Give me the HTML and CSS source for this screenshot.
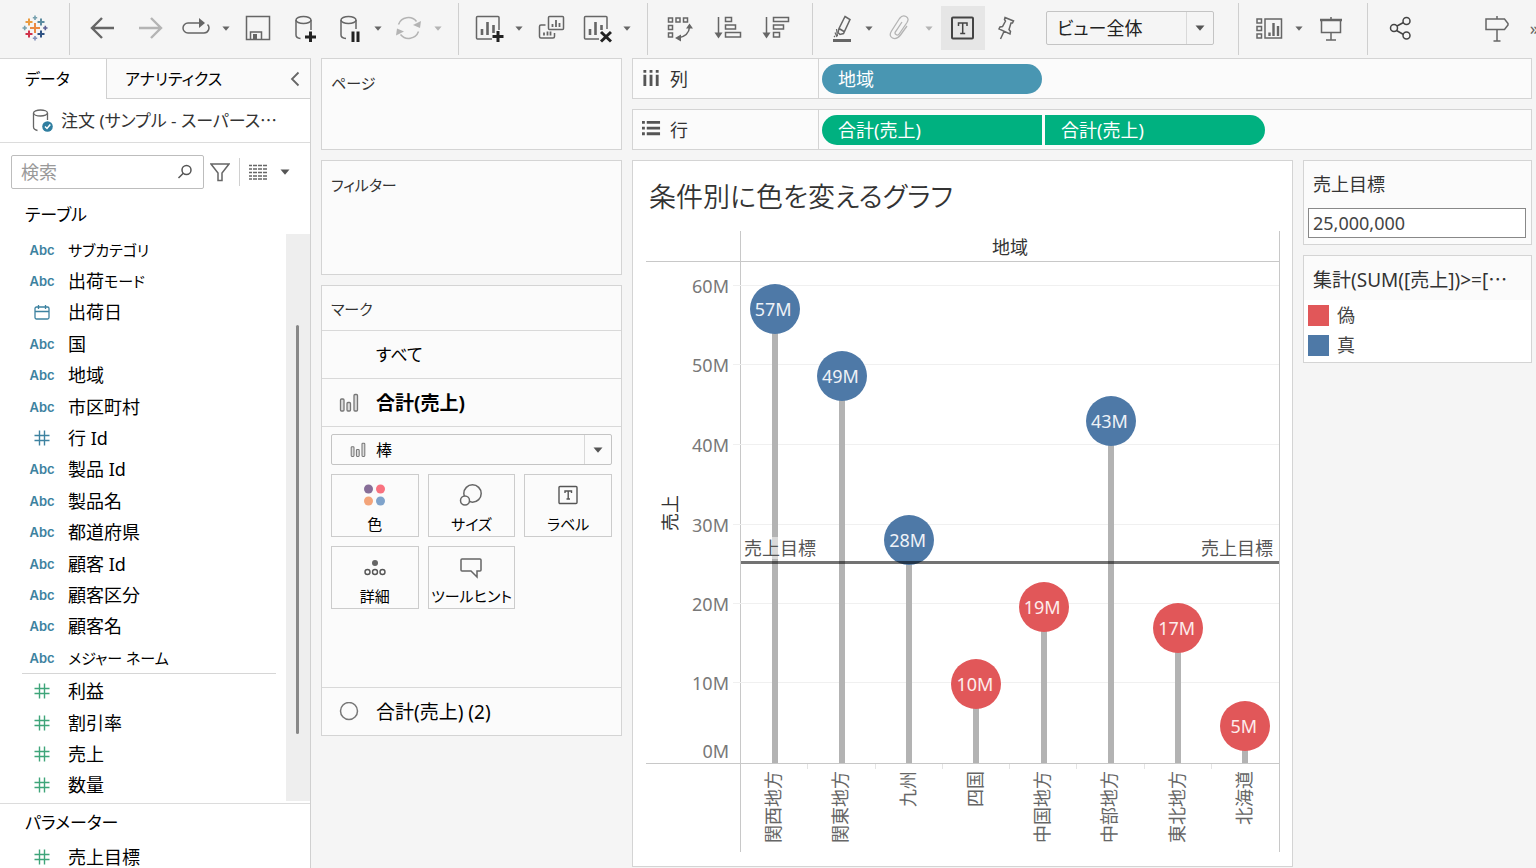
FILE: index.html
```html
<!DOCTYPE html>
<html lang="ja">
<head>
  <meta charset="UTF-8">
  <title>条件別に色を変えるグラフ</title>
  <link rel="stylesheet" href="styles.css">
</head>
<body>
  <svg class="defs" width="0" height="0" aria-hidden="true">
    <symbol id="caret" viewBox="0 0 10 6"><path d="M0.5 0.500h9L5 5.800z" fill="currentColor"/></symbol>
    <symbol id="hash" viewBox="0 0 16 16"><path d="M5.500 0.500v15M10.500 0.500v15M0.500 5.500h15M0.500 10.500h15" stroke="currentColor" stroke-width="1.400" fill="none"/></symbol>
    <symbol id="bars" viewBox="0 0 20 20"><g fill="#ddd" stroke="#777" stroke-width="1.300"><rect x="1.500" y="6" width="3.500" height="12" rx="1"/><rect x="8" y="9.500" width="3.500" height="8.500" rx="1"/><rect x="15" y="1.500" width="3.500" height="16.500" rx="1"/></g></symbol>
  </svg>

  <header class="toolbar">
    <div class="logo">
      <svg width="26" height="26" viewBox="0 0 26 26" fill="none">
        <path d="M13 8v10M8 13h10" stroke="#eb8a43" stroke-width="2"/>
        <path d="M7 3.500v7M3.500 7h7" stroke="#eb9b3f" stroke-width="2"/>
        <path d="M19 3.500v7M15.500 7h7" stroke="#5c8ba0" stroke-width="2"/>
        <path d="M7 15.500v7M3.500 19h7" stroke="#d0334b" stroke-width="2"/>
        <path d="M19 15.500v7M15.500 19h7" stroke="#2e5283" stroke-width="2"/>
        <path d="M13 .500v4.500M10.800 2.700h4.400M2.700 10.800v4.400M.500 13h4.400" stroke="#76a0ae" stroke-width="1.600"/>
        <path d="M23.300 10.800v4.400M21.100 13h4.400" stroke="#5b5f94" stroke-width="1.600"/>
        <path d="M13 21v4.400M10.800 23.200h4.400" stroke="#8290b8" stroke-width="1.600"/>
      </svg>
    </div>

    <div class="group">
      <button class="tool wide" aria-label="戻る"><svg width="28" height="28" viewBox="0 0 28 28"><path d="M26 14H4M14 4L4 14l10 10" stroke-width="2.400"/></svg></button>
      <button class="tool wide off" aria-label="進む"><svg width="28" height="28" viewBox="0 0 28 28"><path d="M3 14h22M15 4l10 10-10 10" stroke-width="2.400"/></svg></button>
      <button class="tool" aria-label="やり直し"><svg width="28" height="28" viewBox="0 0 28 28"><path d="M18 9H6a5 5 0 0 0 0 10h16a5 5 0 0 0 3.500-8.500"/><path class="fill" d="M17 4l6 5-6 5z"/></svg></button>
      <button class="tool drop" aria-label="やり直しメニュー"><svg width="8" height="5"><use href="#caret"/></svg></button>
      <button class="tool wide" aria-label="保存"><svg width="28" height="28" viewBox="0 0 28 28"><path d="M2.500 2.500h23v23h-23zM6.500 25v-7h11v7"/><path class="fill" d="M9 20h4v5H9z"/></svg></button>
      <button class="tool wide" aria-label="新しいデータソース"><svg width="28" height="28" viewBox="0 0 28 28"><ellipse cx="11.500" cy="6" rx="7.500" ry="3.500"/><path d="M4 6v15q0 3 4.500 3.500M19 6v10"/><path class="strong" d="M18.500 17.500v11M13 23h11"/></svg></button>
      <button class="tool narrow" aria-label="自動更新の一時停止"><svg width="28" height="28" viewBox="0 0 28 28"><ellipse cx="12.500" cy="6" rx="7.500" ry="3.500"/><path d="M5 6v15q0 3 5 3.500M20 6v9"/><path class="strong" d="M17 17.500v10.500M22 17.500v10.500"/></svg></button>
      <button class="tool drop" aria-label="更新メニュー"><svg width="8" height="5"><use href="#caret"/></svg></button>
      <button class="tool off" aria-label="更新"><svg width="28" height="28" viewBox="0 0 28 28"><path d="M4.500 10.500a10.500 10.500 0 0 1 18-3M24.500 17.500a10.500 10.500 0 0 1-18 3"/><path class="fill" d="M27 7l-1 7-7-3zM2 21.500l1-7 7 3z"/></svg></button>
      <button class="tool drop off" aria-label="実行メニュー"><svg width="8" height="5"><use href="#caret"/></svg></button>
    </div>

    <div class="group">
      <button class="tool" aria-label="新しいワークシート"><svg width="30" height="30" viewBox="0 0 30 30"><path d="M18 26H3.500a1 1 0 0 1-1-1V4.500a1 1 0 0 1 1-1H24a1 1 0 0 1 1 1V17"/><path d="M8 22v-6M13.500 22V9M19.500 20v-8" stroke-width="2.600"/><path class="strong" d="M24 18v11M18.500 23.500h11"/></svg></button>
      <button class="tool drop" aria-label="ワークシートメニュー"><svg width="8" height="5"><use href="#caret"/></svg></button>
      <button class="tool wide" aria-label="複製"><svg width="28" height="28" viewBox="0 0 28 28"><rect x="11.500" y="2.500" width="15" height="13" rx="1"/><path d="M8.500 11H4a1.500 1.500 0 0 0-1.500 1.500v10A1.500 1.500 0 0 0 4 24h12a1.500 1.500 0 0 0 1.500-1.500V19"/><path d="M15.500 13v-3M19 13V6M22.500 13V9M7 21.500v-3M10.500 21.500v-4M13.500 21.500v-4" stroke-width="1.800"/></svg></button>
      <button class="tool" aria-label="クリア"><svg width="30" height="30" viewBox="0 0 30 30"><path d="M17 26H3.500a1 1 0 0 1-1-1V4.500a1 1 0 0 1 1-1H24a1 1 0 0 1 1 1V16"/><path d="M8 22v-6M13.500 22V9M19.500 17v-5" stroke-width="2.600"/><path class="strong" d="M19 19l10 9.500M29 19l-10 9.500"/></svg></button>
      <button class="tool drop" aria-label="クリアメニュー"><svg width="8" height="5"><use href="#caret"/></svg></button>
    </div>

    <div class="group">
      <button class="tool wide" aria-label="行と列の交換"><svg width="28" height="28" viewBox="0 0 28 28"><path d="M2.500 4h4v4h-4zM10 4h4v4h-4zM17.500 4h4v4h-4zM2.500 11.500h4v4h-4zM2.500 19h4v4h-4zM12 24q11-2 11.500-11" /><path class="fill" d="M20 14.500l3.500-5 3.500 5zM15 20.500v7l-6-3.500z"/></svg></button>
      <button class="tool wide" aria-label="昇順"><svg width="28" height="28" viewBox="0 0 28 28"><path d="M4.500 3v16M11.500 3.500h6v4h-6zM11.500 11h10v4h-10zM11.500 18.500h15v4.500h-15z"/><path class="fill" d="M.500 18.500h8l-4 6z"/></svg></button>
      <button class="tool wide" aria-label="降順"><svg width="28" height="28" viewBox="0 0 28 28"><path d="M4.500 3v16M11.500 3.500h15v4h-15zM11.500 11h10v4h-10zM11.500 18.500h6v4.500h-6z"/><path class="fill" d="M.500 18.500h8l-4 6z"/></svg></button>
    </div>

    <div class="group">
      <button class="tool narrow" aria-label="ハイライト"><svg width="28" height="28" viewBox="0 0 28 28"><path d="M18 2.500l5 3-6.500 14-3.500 1-2-2 1-4zM12 14.500l5 3"/><path d="M9.500 15l1 7M8 18.500l2 4.500M7 22l1 1" stroke-width="1.200"/><path d="M6 26.500h18" stroke-width="3"/></svg></button>
      <button class="tool drop" aria-label="ハイライトメニュー"><svg width="8" height="5"><use href="#caret"/></svg></button>
      <button class="tool off" aria-label="グループ"><svg width="28" height="28" viewBox="0 0 28 28"><path d="M22 12l-6.500 9q-4 5-8 3t-1-7l8-12.500q3-4 6.500-2t1 6l-7.500 11q-1.500 2.500-3.500 1t0-3.500l6-9" stroke-width="1.300"/></svg></button>
      <button class="tool drop off" aria-label="グループメニュー"><svg width="8" height="5"><use href="#caret"/></svg></button>
      <button class="tool active" aria-label="マークラベル"><svg width="28" height="28" viewBox="0 0 28 28"><rect x="3" y="3.500" width="21" height="21" rx="1" stroke-width="2"/><path d="M9.500 12V9h8.500v3M13.700 9v10.500M11.200 19.500h5"/></svg></button>
      <button class="tool" aria-label="固定"><svg width="28" height="28" viewBox="0 0 28 28"><path d="M12 3.500l8.500 3.500-1 2-1.500 0-2 6.500 1.500 2-.500 2.500-11-5 1-2 2.500-.500 3-5.500-1-1.500zM11 17.500L7.500 25"/></svg></button>
      <div class="combo fit">
        <select aria-label="表示サイズ"><option>ビュー全体</option></select>
        <span class="combo-arrow"><svg width="10" height="6"><use href="#caret"/></svg></span>
      </div>
    </div>

    <div class="group">
      <button class="tool" aria-label="カード表示"><svg width="32" height="28" viewBox="0 0 32 28"><path d="M4 5h4.500v4H4zM4 12.500h4.500v4H4zM4 20h4.500v4H4zM12 5h16.500v19H12z"/><path d="M16.500 22v-3.500M20.500 22V9M25 22V12" stroke-width="2.400"/></svg></button>
      <button class="tool drop" aria-label="カードメニュー"><svg width="8" height="5"><use href="#caret"/></svg></button>
      <button class="tool wide" aria-label="プレゼンテーション"><svg width="28" height="28" viewBox="0 0 28 28"><path d="M4.500 6v12.500h19V6M14 18.500V26M9 26h10M14 3v3"/><path d="M3 6h22" stroke-width="2.500"/></svg></button>
    </div>

    <div class="group last">
      <button class="tool wide share" aria-label="共有"><svg width="28" height="28" viewBox="0 0 28 28"><circle cx="8" cy="14" r="3.500"/><circle cx="20.500" cy="7" r="3.500"/><circle cx="20.500" cy="21.500" r="3.500"/><path d="M11 12l6.500-3.500M10.500 16.500l7 4"/></svg></button>
      <button class="tool guide" aria-label="データガイド"><svg width="28" height="28" viewBox="0 0 28 28"><path d="M3 5h18.500l3.500 4.500v1.500l-3.500 4.500H3zM14 2v3M14 15.500V27M10.500 27h7"/></svg></button>
      <button class="tool more" aria-label="その他">»</button>
    </div>
  </header>

  <main class="workspace">
    <aside class="sidebar">
      <div class="tabs">
        <button class="tab current">データ</button>
        <button class="tab">アナリティクス
          <svg width="10" height="16" viewBox="0 0 10 16"><path d="M8.500 1.500L2 8l6.500 6.500" fill="none" stroke="#666" stroke-width="1.800"/></svg>
        </button>
      </div>
      <div class="source">
        <svg width="24" height="26" viewBox="0 0 24 26" fill="none" stroke="#666" stroke-width="1.300"><ellipse cx="9.500" cy="5" rx="7" ry="3"/><path d="M2.500 5v14q0 2.500 4 3.500M16.500 5v7"/><circle cx="16.500" cy="18.500" r="5.300" fill="#2f7ea0" stroke="none"/><path d="M14 18.500l2 2 3.300-4" stroke="#fff" stroke-width="1.500"/></svg>
        <span>注文 (サンプル - スーパース<span class="dots">…</span></span>
      </div>
      <div class="search-row">
        <label class="search">
          <input type="text" placeholder="検索" aria-label="検索">
          <svg width="16" height="16" viewBox="0 0 16 16" fill="none" stroke="#555" stroke-width="1.500"><circle cx="9.500" cy="6" r="4.500"/><path d="M6.300 9.200L1.500 14"/></svg>
        </label>
        <button class="plain" aria-label="フィルター"><svg width="20" height="20" viewBox="0 0 20 20"><path d="M1 2h18l-7 9v7.500H8V11z" fill="none" stroke="#666" stroke-width="1.500"/></svg></button>
        <button class="plain view" aria-label="表示"><svg width="18" height="16" viewBox="0 0 18 16" stroke="#666" stroke-width="1.600"><path d="M0 1.500h18M0 5h18M0 8.500h18M0 12h18M0 15h18" stroke-dasharray="3 1 4 1 4 1 4 0"/></svg><svg width="10" height="6"><use href="#caret"/></svg></button>
      </div>
      <h2 class="side-title">テーブル</h2>
      <div class="list">
        <ul class="fields">
          <li><i>Abc</i><span class="kana">サブカテゴリ</span></li>
          <li><i>Abc</i>出荷<span class="kana">モード</span></li>
          <li><i><svg width="16" height="16" viewBox="0 0 16 16" fill="none" stroke="currentColor" stroke-width="1.300"><rect x="1" y="3" width="14" height="12" rx="1.500"/><path d="M1 7.500h14M4.500 1v4M11.500 1v4"/></svg></i>出荷日</li>
          <li><i>Abc</i>国</li>
          <li><i>Abc</i>地域</li>
          <li><i>Abc</i>市区町村</li>
          <li><i><svg width="16" height="16"><use href="#hash"/></svg></i>行 Id</li>
          <li><i>Abc</i>製品 Id</li>
          <li><i>Abc</i>製品名</li>
          <li><i>Abc</i>都道府県</li>
          <li><i>Abc</i>顧客 Id</li>
          <li><i>Abc</i>顧客区分</li>
          <li><i>Abc</i>顧客名</li>
          <li><i>Abc</i><span class="kana">メジャー ネーム</span></li>
          <li class="rule"></li>
          <li class="measure"><i><svg width="16" height="16"><use href="#hash"/></svg></i>利益</li>
          <li class="measure"><i><svg width="16" height="16"><use href="#hash"/></svg></i>割引率</li>
          <li class="measure"><i><svg width="16" height="16"><use href="#hash"/></svg></i>売上</li>
          <li class="measure"><i><svg width="16" height="16"><use href="#hash"/></svg></i>数量</li>
        </ul>
        <div class="scroll"><div class="thumb"></div></div>
      </div>
      <div class="params">
        <h2 class="side-title">パラメーター</h2>
        <ul class="fields">
          <li class="measure"><i><svg width="16" height="16"><use href="#hash"/></svg></i>売上目標</li>
        </ul>
      </div>
    </aside>

    <section class="cards">
      <div class="card pages"><h3>ページ</h3></div>
      <div class="card filters"><h3>フィルター</h3></div>
      <div class="card marks">
        <h3>マーク</h3>
        <div class="mark-row all">すべて</div>
        <div class="mark-row selected"><svg width="20" height="20"><use href="#bars"/></svg><span>合計(売上)</span></div>
        <div class="mark-body">
          <div class="combo mark-type">
            <svg width="16" height="16"><use href="#bars"/></svg>
            <select aria-label="マークタイプ"><option>棒</option></select>
            <span class="combo-arrow"><svg width="10" height="6"><use href="#caret"/></svg></span>
          </div>
          <div class="mark-buttons">
            <button><svg width="24" height="24" viewBox="0 0 24 24"><circle cx="5.500" cy="6" r="4.500" fill="#876e98"/><circle cx="17.500" cy="6" r="4.500" fill="#f9727f"/><circle cx="5.500" cy="18" r="4.500" fill="#f3a47a"/><circle cx="17.500" cy="18" r="4.500" fill="#7fa3cb"/></svg>色</button>
            <button><svg width="24" height="24" viewBox="0 0 24 24" fill="none" stroke="#666" stroke-width="1.500"><circle cx="13.500" cy="10.500" r="8.700"/><circle cx="6" cy="17.500" r="4.500" fill="#fbfbfb"/></svg>サイズ</button>
            <button><svg width="24" height="24" viewBox="0 0 24 24" fill="none" stroke="#555" stroke-width="1.400"><rect x="3" y="3.500" width="18" height="17" rx="1"/><path d="M9 10V8h6.500v2M12.200 8v8M10.500 16h3.500"/></svg>ラベル</button>
            <button><svg width="24" height="24" viewBox="0 0 24 24" fill="none" stroke="#555" stroke-width="1.400"><circle cx="12" cy="8" r="3" fill="#666" stroke="none"/><circle cx="4.500" cy="17" r="2.500"/><circle cx="12" cy="17" r="2.500"/><circle cx="19.500" cy="17" r="2.500"/></svg>詳細</button>
            <button><svg width="24" height="24" viewBox="0 0 24 24" fill="none" stroke="#666" stroke-width="1.500"><path d="M3 4h18q1 0 1 1v10q0 1-1 1h-3v6l-6-6H3q-1 0-1-1V5q0-1 1-1z"/></svg>ツールヒント</button>
          </div>
        </div>
        <div class="mark-row"><svg width="20" height="20" viewBox="0 0 20 20"><circle cx="10" cy="9" r="8.500" fill="none" stroke="#777" stroke-width="1.500"/></svg><span>合計(売上) (2)</span></div>
      </div>
    </section>

    <section class="sheet">
      <div class="shelf">
        <div class="shelf-name"><svg width="19" height="19" viewBox="0 0 20 20" stroke="#555" stroke-width="3"><path d="M3 6v12M9.500 6v12M16 6v12M3 1v3M9.500 1v3M16 1v3"/></svg>列</div>
        <div class="pills"><span class="pill blue">地域</span></div>
      </div>
      <div class="shelf">
        <div class="shelf-name"><svg width="19" height="19" viewBox="0 0 20 20" stroke="#555" stroke-width="3"><path d="M5 2.500h14M5 8.500h14M5 14.500h14M0 2.500h3M0 8.500h3M0 14.500h3"/></svg>行</div>
        <div class="pills"><span class="pill green open">合計(売上)</span><span class="pill green close">合計(売上)</span></div>
      </div>

      <div class="stage">
        <div class="view">
          <h1>条件別に色を変えるグラフ</h1>
          <div class="chart">
            <div class="corner"></div>
            <div class="col-header">地域</div>
            <div class="y-axis">
              <span class="axis-name">売上</span>
              <span class="tick" style="bottom: 95.2%">60M</span>
              <span class="tick" style="bottom: 79.4%">50M</span>
              <span class="tick" style="bottom: 63.5%">40M</span>
              <span class="tick" style="bottom: 47.6%">30M</span>
              <span class="tick" style="bottom: 31.7%">20M</span>
              <span class="tick" style="bottom: 15.9%">10M</span>
              <span class="tick zero" style="bottom: 0%">0M</span>
            </div>
            <div class="plot">
              <div class="grid-line" style="bottom: 95.2%"></div>
              <div class="grid-line" style="bottom: 79.4%"></div>
              <div class="grid-line" style="bottom: 63.5%"></div>
              <div class="grid-line" style="bottom: 47.6%"></div>
              <div class="grid-line" style="bottom: 31.7%"></div>
              <div class="grid-line" style="bottom: 15.9%"></div>
              <div class="slot"><div class="bar" style="height: 90.6%"><span class="dot">57M</span></div></div>
              <div class="slot"><div class="bar" style="height: 77.2%"><span class="dot">49M</span></div></div>
              <div class="slot"><div class="bar" style="height: 44.6%"><span class="dot">28M</span></div></div>
              <div class="slot"><div class="bar" style="height: 15.7%"><span class="dot under">10M</span></div></div>
              <div class="slot"><div class="bar" style="height: 31.1%"><span class="dot under">19M</span></div></div>
              <div class="slot"><div class="bar" style="height: 68.3%"><span class="dot">43M</span></div></div>
              <div class="slot"><div class="bar" style="height: 27.0%"><span class="dot under">17M</span></div></div>
              <div class="slot"><div class="bar" style="height: 7.4%"><span class="dot under">5M</span></div></div>
              <div class="target" style="bottom: 39.7%"><span>売上目標</span><span>売上目標</span></div>
            </div>
            <div class="corner-bottom"></div>
            <div class="x-axis">
              <div><span>関西地方</span></div>
              <div><span>関東地方</span></div>
              <div><span>九州</span></div>
              <div><span>四国</span></div>
              <div><span>中国地方</span></div>
              <div><span>中部地方</span></div>
              <div><span>東北地方</span></div>
              <div><span>北海道</span></div>
            </div>
          </div>
        </div>

        <div class="controls">
          <div class="card">
            <label class="control-title" for="target">売上目標</label>
            <input class="target-input" id="target" type="text" value="25,000,000">
          </div>
          <div class="card">
            <div class="control-title large">集計(SUM([売上])&gt;=[<span class="dots">…</span></div>
            <ul class="legend">
              <li><span class="swatch red"></span>偽</li>
              <li><span class="swatch navy"></span>真</li>
            </ul>
          </div>
        </div>
      </div>
    </section>
  </main>
</body>
</html>
```

FILE: styles.css
```css
* {
  box-sizing: border-box;
}

body {
  display: flex;
  flex-direction: column;
  height: 100vh;
  margin: 0;
  overflow: hidden;
  background: #f5f5f5;
  color: #000;
  font-family: "Noto Sans", "Noto Sans CJK JP", sans-serif;
  font-size: 18px;
  font-feature-settings: "palt";
  line-height: 24px;
}

button, input, select {
  font: inherit;
  font-feature-settings: inherit;
  color: inherit;
}

button {
  padding: 0;
  border: 0;
  background: none;
  cursor: pointer;
}

h1, h2, h3, ul {
  margin: 0;
  padding: 0;
  font-weight: 400;
  list-style: none;
}

svg {
  flex: none;
}

.defs {
  position: absolute;
}

.kana {
  font-size: 15px;
}

.dots {
  font-family: "Noto Sans CJK JP", sans-serif;
}

/* toolbar */
.toolbar {
  display: flex;
  flex: none;
  height: 58px;
}

.logo {
  display: flex;
  align-items: center;
  justify-content: center;
  width: 69px;
  padding-bottom: 2px;
}

.group {
  position: relative;
  display: flex;
  align-items: center;
  padding: 0 12px 2px 9px;
}

.group::before {
  content: '';
  position: absolute;
  left: 0;
  top: 3px;
  width: 1px;
  height: 52px;
  background: #cfcfcf;
}

.group.last {
  flex: 1;
  padding-right: 0;
}

.tool {
  display: flex;
  align-items: center;
  justify-content: center;
  width: 44px;
  height: 44px;
  color: #666;
}

.tool svg {
  fill: none;
  stroke: currentColor;
  stroke-width: 1.5;
}

.tool .fill {
  fill: currentColor;
  stroke: none;
}

.tool .strong {
  stroke: #222;
  stroke-width: 3;
}

.tool.wide {
  width: 48px;
}

.tool.narrow {
  width: 40px;
}

.tool.drop {
  width: 16px;
}

.tool.drop svg {
  stroke: none;
}

.tool.off {
  color: #b4b4b4;
}

.tool.active {
  margin-left: 4px;
  background: #e6e6e6;
  color: #444;
}

.tool.share {
  color: #444;
}

.tool.guide {
  margin-left: auto;
}

.tool.more {
  justify-content: flex-end;
  width: 20px;
  margin-right: -3px;
}

.combo {
  display: grid;
  align-items: center;
  border: 1px solid #c4c4c4;
  border-radius: 2px;
}

.combo > * {
  grid-area: 1 / 1;
}

.combo select {
  width: 100%;
  height: 100%;
  padding: 0 10px;
  border: 0;
  background: none;
  appearance: none;
}

.combo-arrow {
  display: flex;
  align-items: center;
  justify-content: center;
  justify-self: end;
  width: 27px;
  height: 100%;
  border-left: 1px solid #d9d9d9;
  color: #555;
  pointer-events: none;
}

.fit {
  width: 168px;
  height: 34px;
  margin: 0 12px 0 17px;
  color: #222;
}

/* workspace */
.workspace {
  display: flex;
  flex: 1;
  gap: 10px;
  min-height: 0;
  padding-right: 4px;
}

.sidebar {
  display: flex;
  flex-direction: column;
  flex: none;
  width: 311px;
  border-top: 1px solid #d6d6d6;
  border-right: 1px solid #d0d0d0;
  background: #fff;
}

.tabs {
  display: flex;
  height: 40px;
}

.tab {
  display: flex;
  flex: 1;
  align-items: center;
  justify-content: space-between;
  padding: 0 10px 0 18px;
  border-left: 1px solid #d0d0d0;
  border-bottom: 1px solid #d0d0d0;
  background: #fafafa;
  font-size: 16px;
}

.tab.current {
  flex: none;
  width: 106px;
  padding-left: 25px;
  border: 0;
  background: #fff;
}

.source {
  display: flex;
  align-items: center;
  gap: 6px;
  height: 44px;
  padding-left: 31px;
  border-bottom: 1px solid #dcdcdc;
  color: #333;
  font-size: 17px;
  white-space: nowrap;
}

.search-row {
  display: flex;
  align-items: center;
  margin-top: 12px;
  padding-left: 11px;
}

.search {
  display: flex;
  align-items: center;
  width: 193px;
  height: 34px;
  padding: 0 10px 0 9px;
  border: 1px solid #bdbdbd;
  border-radius: 2px;
}

.search input {
  flex: 1;
  min-width: 0;
  padding: 0;
  border: 0;
  outline: 0;
}

.search input::placeholder {
  color: #999;
}

.plain {
  display: flex;
  align-items: center;
  margin-left: 6px;
}

.plain.view {
  gap: 13px;
  height: 28px;
  margin-left: 9px;
  padding-left: 9px;
  border-left: 1px solid #d0d0d0;
  color: #555;
}

.side-title {
  padding-left: 25px;
  font-size: 17px;
  line-height: 24px;
}

.search-row + .side-title {
  margin-top: 14px;
}

.list {
  display: flex;
  flex: 1;
  min-height: 0;
  margin-top: 7px;
}

.list .fields {
  flex: 1;
}

.fields {
  display: flex;
  flex-direction: column;
}

.fields li {
  display: flex;
  flex: 1;
  align-items: center;
  min-height: 24px;
}

.fields i {
  display: flex;
  justify-content: center;
  width: 24px;
  margin: 0 14px 0 30px;
  color: #3d82a0;
  font: 600 13px "Inter", sans-serif;
}

.fields .measure i {
  color: #3fa57a;
}

.fields .rule {
  flex: none;
  min-height: 1px;
  margin: 0 10px 1px 22px;
  background: #d6d6d6;
}

.scroll {
  width: 24px;
  padding: 91px 0 0 10px;
  background: #eee;
}

.thumb {
  width: 3px;
  height: 409px;
  border-radius: 2px;
  background: #888;
}

.params {
  height: 65px;
  margin-top: 2px;
  padding-top: 7px;
  border-top: 1px solid #dcdcdc;
  overflow: hidden;
}

.params .fields li {
  min-height: 44px;
}

/* cards */
.card {
  border: 1px solid #d4d4d4;
  background: #fbfbfb;
}

.cards {
  display: flex;
  flex-direction: column;
  flex: none;
  gap: 10px;
  width: 301px;
}

.card h3 {
  padding: 12px 9px;
  color: #333;
  font-size: 15px;
  line-height: 24px;
}

.pages {
  height: 92px;
}

.filters {
  height: 115px;
}

.card.marks h3 {
  padding: 11px 9px 9px;
}

.mark-row {
  display: flex;
  align-items: center;
  gap: 17px;
  height: 48px;
  padding-left: 17px;
  border-top: 1px solid #d9d9d9;
  font-size: 19px;
}

.mark-row.all {
  padding-left: 54px;
  font-size: 17px;
}

.mark-row.selected {
  font-weight: 700;
}

.mark-body {
  height: 261px;
  padding: 7px 9px;
  border-top: 1px solid #d9d9d9;
}

.mark-type {
  height: 31px;
}

.mark-type svg {
  margin-left: 18px;
}

.mark-type select {
  padding-left: 44px;
  font-size: 16px;
}

.mark-type .combo-arrow svg {
  margin: 0;
}

.mark-buttons {
  display: grid;
  grid-template-columns: repeat(3, 1fr);
  gap: 9px;
  margin-top: 9px;
}

.mark-buttons button {
  display: flex;
  flex-direction: column;
  align-items: center;
  gap: 5px;
  height: 63px;
  padding-top: 8px;
  border: 1px solid #ccc;
  font-size: 15px;
  line-height: 24px;
  white-space: nowrap;
}

/* shelves */
.sheet {
  display: flex;
  flex-direction: column;
  flex: 1;
  gap: 10px;
  min-width: 0;
}

.shelf {
  display: flex;
  height: 41px;
  border: 1px solid #d4d4d4;
  background: #fbfbfb;
  color: #333;
}

.shelf-name {
  display: flex;
  align-items: center;
  gap: 9px;
  width: 186px;
  padding-left: 9px;
  border-right: 1px solid #d4d4d4;
}

.pills {
  display: flex;
  align-items: center;
  gap: 3px;
  padding-left: 3px;
}

.pill {
  width: 220px;
  height: 30px;
  padding-left: 16px;
  border-radius: 15px;
  color: #fff;
  line-height: 30px;
}

.blue {
  background: #4996b2;
}

.green {
  background: #00b180;
}

.open {
  border-radius: 15px 0 0 15px;
}

.close {
  border-radius: 0 15px 15px 0;
}

/* view */
.stage {
  display: flex;
  flex: 1;
  gap: 10px;
  min-height: 0;
  padding-bottom: 1px;
}

.stage .view {
  display: flex;
  flex-direction: column;
  flex: 1;
  padding: 16px 12px 14px 13px;
  border: 1px solid #d4d4d4;
  background: #fff;
}

h1 {
  padding-left: 3px;
  color: #333;
  font-size: 27px;
  font-weight: 350;
  line-height: 40px;
}

.chart {
  display: grid;
  grid-template-columns: 94px 1fr;
  grid-template-rows: 31px 1fr 88px;
  flex: 1;
  margin-top: 14px;
}

.corner, .col-header, .y-axis, .plot {
  border-bottom: 1px solid #c8c8c8;
}

.col-header, .plot, .x-axis {
  border-left: 1px solid #c8c8c8;
  border-right: 1px solid #c8c8c8;
}

.col-header {
  color: #333;
  line-height: 32px;
  text-align: center;
}

.y-axis, .plot {
  position: relative;
}

.axis-name {
  position: absolute;
  top: 50%;
  left: 12px;
  color: #333;
  text-orientation: sideways;
  writing-mode: vertical-rl;
  transform: translateY(-50%) rotate(180deg);
}

.tick {
  position: absolute;
  right: 11px;
  color: #787878;
  transform: translateY(50%);
}

.tick.zero {
  transform: none;
}

.plot {
  display: flex;
}

.grid-line {
  position: absolute;
  left: -8px;
  right: 0;
  height: 1px;
  background: #f0f0f0;
}

.slot {
  display: flex;
  flex: 1;
  align-items: flex-end;
  justify-content: center;
}

.bar {
  position: relative;
  width: 6px;
  background: #b3b3b3;
}

.dot {
  position: absolute;
  top: -25px;
  left: -22px;
  width: 50px;
  height: 50px;
  padding-right: 3px;
  border-radius: 50%;
  background: #4e79a7;
  color: #eef2f7;
  line-height: 50px;
  text-align: center;
}

.dot.under {
  background: #e15759;
  color: #fdecec;
}

.target {
  position: absolute;
  left: 0;
  right: 0;
  display: flex;
  justify-content: space-between;
  padding: 0 6px 2px 3px;
  border-bottom: 3px solid rgba(0, 0, 0, 0.55);
}

.target span {
  background: rgba(255, 255, 255, 0.5);
  color: #555;
  line-height: 22px;
}

.x-axis {
  display: flex;
}

.x-axis div {
  display: flex;
  flex: 1;
  align-items: flex-start;
  justify-content: center;
  padding: 7px 3px 0 0;
  background: linear-gradient(#e4e4e4, #e4e4e4) right top / 1px 5px no-repeat;
  color: #666;
}

.x-axis div:last-child {
  background: none;
}

.x-axis span {
  text-orientation: sideways;
  writing-mode: vertical-rl;
  transform: rotate(180deg);
}

/* parameter and legend */
.controls {
  display: flex;
  flex-direction: column;
  flex: none;
  gap: 10px;
  width: 229px;
}

.control-title {
  display: block;
  padding: 11px 9px 8px;
  color: #333;
  white-space: nowrap;
}

.control-title.large {
  font-size: 19px;
}

.target-input {
  display: block;
  width: calc(100% - 9px);
  height: 30px;
  margin: 4px 4px 6px;
  padding: 0 4px;
  border: 1px solid #888;
  background: #fff;
  color: #444;
}

.legend {
  padding: 0 4px 2px;
  background: #fff;
}

.legend li {
  display: flex;
  align-items: center;
  gap: 8px;
  height: 30px;
  color: #444;
}

.swatch {
  width: 21px;
  height: 21px;
}

.red {
  background: #e15759;
}

.navy {
  background: #4e79a7;
}
```
